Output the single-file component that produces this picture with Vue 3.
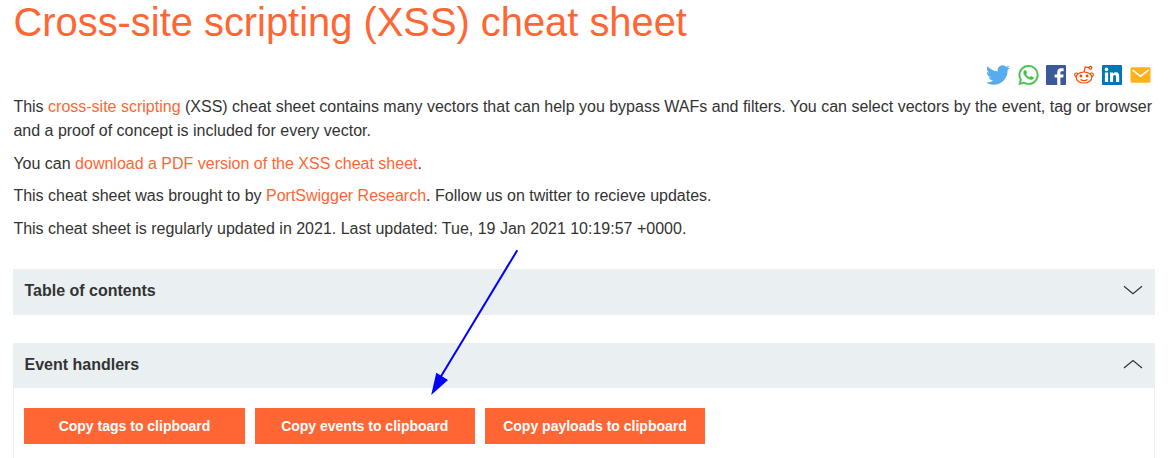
<script setup>
const buttons = ['Copy tags to clipboard', 'Copy events to clipboard', 'Copy payloads to clipboard']
</script>

<template>
  <main class="page">
    <h1>Cross-site scripting (XSS) cheat sheet</h1>

    <div class="share">
      <svg class="twitter" viewBox="0 2 24 20" width="24" height="20">
        <path fill="#55acee" d="M23.953 4.57a10 10 0 01-2.825.775 4.958 4.958 0 002.163-2.723c-.951.555-2.005.959-3.127 1.184a4.92 4.92 0 00-8.384 4.482C7.69 8.095 4.067 6.13 1.64 3.162a4.822 4.822 0 00-.666 2.475c0 1.71.87 3.213 2.188 4.096a4.904 4.904 0 01-2.228-.616v.06a4.923 4.923 0 003.946 4.827 4.996 4.996 0 01-2.212.085 4.936 4.936 0 004.604 3.417 9.867 9.867 0 01-6.102 2.105c-.39 0-.779-.023-1.17-.067a13.995 13.995 0 007.557 2.209c9.053 0 13.998-7.496 13.998-13.985 0-.21 0-.42-.015-.63A9.935 9.935 0 0024 4.59z" />
      </svg>
      <svg class="whatsapp" viewBox="0 0 24 24" width="21" height="20">
        <path fill="#43c14b" stroke="#43c14b" stroke-width=".3" d="M17.472 14.382c-.297-.149-1.758-.867-2.03-.967-.273-.099-.471-.148-.67.15-.197.297-.767.966-.94 1.164-.173.199-.347.223-.644.075-.297-.15-1.255-.463-2.39-1.475-.883-.788-1.48-1.761-1.653-2.059-.173-.297-.018-.458.13-.606.134-.133.298-.347.446-.52.149-.174.198-.298.298-.497.099-.198.05-.371-.025-.52-.075-.149-.669-1.612-.916-2.207-.242-.579-.487-.5-.669-.51-.173-.008-.371-.01-.57-.01-.198 0-.52.074-.792.372-.272.297-1.04 1.016-1.04 2.479 0 1.462 1.065 2.875 1.213 3.074.149.198 2.096 3.2 5.077 4.487.709.306 1.262.489 1.694.625.712.227 1.36.195 1.871.118.571-.085 1.758-.719 2.006-1.413.248-.694.248-1.289.173-1.413-.074-.124-.272-.198-.57-.347m-5.421 7.403h-.004a9.87 9.87 0 01-5.031-1.378l-.361-.214-3.741.982.998-3.648-.235-.374a9.86 9.86 0 01-1.51-5.26c.001-5.45 4.436-9.884 9.888-9.884 2.64 0 5.122 1.03 6.988 2.898a9.825 9.825 0 012.893 6.994c-.003 5.45-4.437 9.884-9.885 9.884m8.413-18.297A11.815 11.815 0 0012.05 0C5.495 0 .16 5.335.157 11.892c0 2.096.547 4.142 1.588 5.945L.057 24l6.305-1.654a11.882 11.882 0 005.683 1.448h.005c6.554 0 11.89-5.335 11.893-11.893a11.821 11.821 0 00-3.48-8.413z" />
      </svg>
      <svg class="facebook" viewBox="0 0 20 20" width="20" height="20">
        <rect width="20" height="20" rx="1" fill="#3b5998" />
        <path fill="#fff" d="M11.2 20v-7.5H8.6V9.4h2.6V7.3c0-2.6 1.6-4.1 4-4.1 1.1 0 2.1.1 2.4.1v2.9H16c-1.3 0-1.6.6-1.6 1.5v1.7h3.2l-.4 3.1h-2.8V20z" />
      </svg>
      <svg class="reddit" viewBox="0 0 20 20" width="20" height="20">
        <g fill="#fff" stroke="#ff4500" stroke-width="1.2">
          <circle cx="2.5" cy="9.8" r="1.8" />
          <circle cx="17.5" cy="9.8" r="1.8" />
          <path fill="none" d="M10 7 11.2 2l3.8.7" />
          <circle cx="16.4" cy="2.8" r="1.4" />
          <ellipse cx="10" cy="12.5" rx="7.8" ry="5.5" />
          <path fill="none" d="M6.6 14.6q3.4 2.2 6.8 0" />
        </g>
        <g fill="#ff4500"><circle cx="6.9" cy="11" r="1.4" /><circle cx="13.1" cy="11" r="1.4" /></g>
      </svg>
      <svg class="linkedin" viewBox="0 0 20 20" width="20" height="20">
        <rect width="20" height="20" rx="1" fill="#0077b5" />
        <g fill="#fff">
          <circle cx="4.5" cy="4.4" r="1.8" />
          <path d="M2.9 7.4h3.2V17H2.9zM8 7.4h3v1.3c.5-.9 1.5-1.5 2.8-1.5 2.8 0 3.4 1.8 3.4 4.4V17H14v-4.7c0-1.2-.1-2.3-1.4-2.3s-1.5 1-1.5 2.3V17H8z" />
        </g>
      </svg>
      <svg class="mail" viewBox="0 0 21 16" width="21" height="16">
        <rect x=".5" y=".3" width="20" height="15.4" rx="1.4" fill="#ffb11b" />
        <path fill="none" stroke="#fff" stroke-width="1.5" d="m2.5 3.2 8 6 8-6" />
      </svg>
    </div>

    <section class="intro">
      <p>This <a>cross-site scripting</a> (XSS) cheat sheet contains many vectors that can help you bypass WAFs and filters. You can select vectors by the event, tag or browser and a proof of concept is included for every vector.</p>
      <p>You can <a>download a PDF version of the XSS cheat sheet</a>.</p>
      <p>This cheat sheet was brought to by <a>PortSwigger Research</a>. Follow us on twitter to recieve updates.</p>
      <p>This cheat sheet is regularly updated in 2021. Last updated: Tue, 19 Jan 2021 10:19:57 +0000.</p>
    </section>

    <section class="panel contents">
      <header>
        <h2>Table of contents</h2>
        <svg viewBox="0 0 20 10" width="20" height="10"><path d="m1 1.3 9 7.5 9-7.5" /></svg>
      </header>
    </section>

    <section class="panel events">
      <header>
        <h2>Event handlers</h2>
        <svg viewBox="0 0 20 10" width="20" height="10"><path d="m1 9 9-7.5L19 9" /></svg>
      </header>
      <div class="actions">
        <button v-for="label in buttons" :key="label">{{ label }}</button>
      </div>
    </section>

    <svg class="arrow" viewBox="0 0 90 148" width="90" height="148">
      <path d="M87.3 2.2 10 130" fill="none" stroke="#00f" stroke-width="2" />
      <path d="M1.2 147 6.3 124.8 18 132z" fill="#00f" />
    </svg>
  </main>
</template>

<style>
body {
  background: #fff;
}
</style>

<style scoped>
.page {
  position: relative;
  box-sizing: border-box;
  height: 458px;
  padding: 0 18px 0 13px;
  overflow: hidden;
  color: #333332;
  font: 16px/24px "Liberation Sans", Arial, sans-serif;
}
h1 {
  margin: 0;
  height: 62px;
  padding-left: 0.5px;
  color: #ff6633;
  font-size: 39.87px;
  font-weight: 400;
  line-height: 44px;
}
.share {
  display: flex;
  justify-content: flex-end;
  align-items: center;
  height: 26px;
  padding-right: 4px;
}
.share svg {
  display: block;
}
.whatsapp,
.facebook,
.reddit,
.linkedin,
.mail {
  margin-left: 8px;
}
.facebook {
  margin-left: 7px;
}
.intro {
  padding: 7px 0 0 0.4px;
  height: 175px;
  box-sizing: border-box;
}
p {
  margin: 0 0 8.5px;
}
a {
  color: #ff6633;
}
.panel header {
  display: flex;
  justify-content: space-between;
  align-items: center;
  box-sizing: border-box;
  height: 46px;
  padding: 0 12px 2px 11.5px;
  background: #eaeff2;
}
.contents {
  padding-top: 6px;
}
.events {
  margin-top: 28px;
}
.events header {
  height: 45px;
}
h2 {
  margin: 0;
  font-size: 16px;
  line-height: 24px;
}
.panel header svg {
  margin-bottom: 2px;
}
.panel header path {
  fill: none;
  stroke: #333332;
  stroke-width: 1.2;
}
.actions {
  display: flex;
  gap: 10px;
  height: 71px;
  box-sizing: border-box;
  padding: 20px 10px 15px;
  border: solid #eaeff2;
  border-width: 0 1px;
}
button {
  width: 220px;
  height: 36px;
  padding: 0;
  border: 0;
  background: #ff6633;
  color: #fff;
  font: bold 14px "Liberation Sans", Arial, sans-serif;
}
button:first-child {
  width: 221px;
}
button:nth-child(2) {
  padding-right: 0.5px;
}
.arrow {
  position: absolute;
  left: 430px;
  top: 248px;
}
</style>
